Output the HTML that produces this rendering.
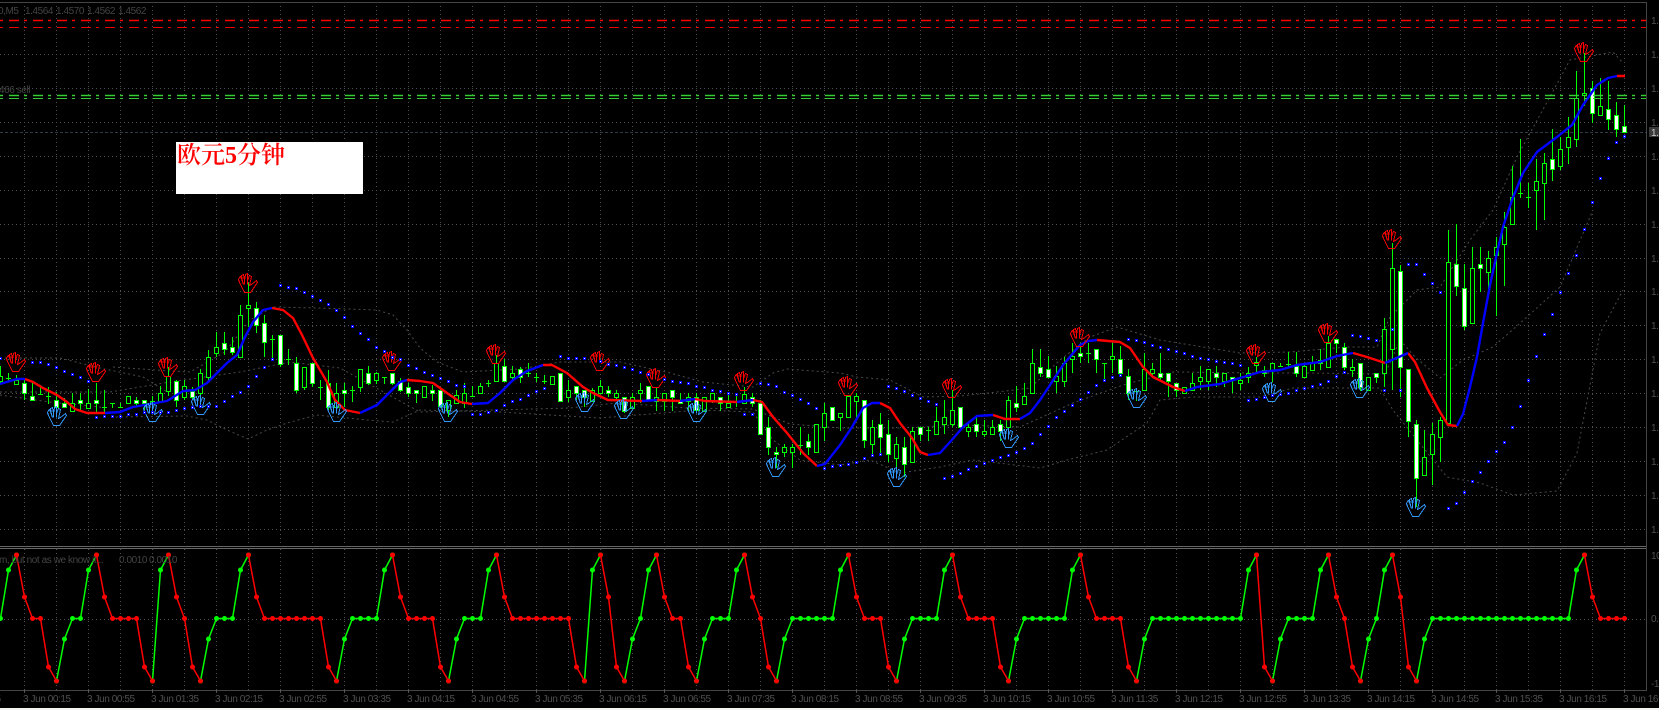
<!DOCTYPE html>
<html lang="zh"><head><meta charset="utf-8"><title>EURUSD M5</title>
<style>
html,body{margin:0;padding:0;background:#000;width:1659px;height:710px;overflow:hidden}
svg{display:block;position:absolute;left:0;top:0}
text{font-family:"Liberation Sans","Noto Sans CJK SC",sans-serif;font-size:10px;fill:#505050;letter-spacing:-.42px}
.cn{font-family:"Liberation Serif","Noto Serif CJK SC",serif;font-size:24px;font-weight:600;fill:#f00;letter-spacing:0}
.l{fill:#444}
</style></head><body>
<svg width="1659" height="710" viewBox="0 0 1659 710" xmlns="http://www.w3.org/2000/svg">
<defs>
<path id="h" fill="none" d="M6 19L1 9 0 6 1 4 2 3 4 8 3 2 5 1 6 7 7 1 9 0V7L11 2 13 3 11 12 13 11 18 7 19 9 12 19ZM4 8L5 11M6 7V11M9 7V11"/>
<marker id="mg" viewBox="-3 -3 6 6" markerWidth="5" markerHeight="5" markerUnits="userSpaceOnUse"><circle r="3" fill="#0f0"/></marker>
<marker id="mr" viewBox="-3 -3 6 6" markerWidth="5" markerHeight="5" markerUnits="userSpaceOnUse"><circle r="3" fill="#f00"/></marker>
</defs>
<rect width="1659" height="710" fill="#000"/>

<!-- grid -->
<path fill="none" stroke="#505050" stroke-dasharray="1 3" d="M24.5 2V546M56.5 2V546M88.5 2V546M120.5 2V546M152.5 2V546M184.5 2V546M216.5 2V546M248.5 2V546M280.5 2V546M312.5 2V546M344.5 2V546M376.5 2V546M408.5 2V546M440.5 2V546M472.5 2V546M504.5 2V546M536.5 2V546M568.5 2V546M600.5 2V546M632.5 2V546M664.5 2V546M696.5 2V546M728.5 2V546M760.5 2V546M792.5 2V546M824.5 2V546M856.5 2V546M888.5 2V546M920.5 2V546M952.5 2V546M984.5 2V546M1016.5 2V546M1048.5 2V546M1080.5 2V546M1112.5 2V546M1144.5 2V546M1176.5 2V546M1208.5 2V546M1240.5 2V546M1272.5 2V546M1304.5 2V546M1336.5 2V546M1368.5 2V546M1400.5 2V546M1432.5 2V546M1464.5 2V546M1496.5 2V546M1528.5 2V546M1560.5 2V546M1592.5 2V546M1624.5 2V546
M24.5 549V690M56.5 549V690M88.5 549V690M120.5 549V690M152.5 549V690M184.5 549V690M216.5 549V690M248.5 549V690M280.5 549V690M312.5 549V690M344.5 549V690M376.5 549V690M408.5 549V690M440.5 549V690M472.5 549V690M504.5 549V690M536.5 549V690M568.5 549V690M600.5 549V690M632.5 549V690M664.5 549V690M696.5 549V690M728.5 549V690M760.5 549V690M792.5 549V690M824.5 549V690M856.5 549V690M888.5 549V690M920.5 549V690M952.5 549V690M984.5 549V690M1016.5 549V690M1048.5 549V690M1080.5 549V690M1112.5 549V690M1144.5 549V690M1176.5 549V690M1208.5 549V690M1240.5 549V690M1272.5 549V690M1304.5 549V690M1336.5 549V690M1368.5 549V690M1400.5 549V690M1432.5 549V690M1464.5 549V690M1496.5 549V690M1528.5 549V690M1560.5 549V690M1592.5 549V690M1624.5 549V690
M0 54.5H1646M0 88.5H1646M0 122.5H1646M0 156.5H1646M0 190.5H1646M0 224.5H1646M0 258.5H1646M0 291.5H1646M0 325.5H1646M0 359.5H1646M0 393.5H1646M0 427.5H1646M0 461.5H1646M0 495.5H1646M0 529.5H1646M0 619.5H1646"/>
<path fill="none" stroke="#323a44" stroke-dasharray="3 2" d="M0 132.5H1646"/>

<!-- frame -->
<path fill="none" stroke="#444" d="M0 2.5H1646.5V690.5H0M1646.5 547V690"/>
<path fill="none" stroke="#666" d="M0 546.5H1646M0 548.5H1646"/>
<path fill="none" stroke="#555" d="M24.5 690V693M88.5 690V693M152.5 690V693M216.5 690V693M280.5 690V693M344.5 690V693M408.5 690V693M472.5 690V693M536.5 690V693M600.5 690V693M664.5 690V693M728.5 690V693M792.5 690V693M856.5 690V693M920.5 690V693M984.5 690V693M1048.5 690V693M1112.5 690V693M1176.5 690V693M1240.5 690V693M1304.5 690V693M1368.5 690V693M1432.5 690V693M1496.5 690V693M1560.5 690V693M1624.5 690V693"/>
<rect x="0" y="708" width="1659" height="2" fill="#f4f4f0"/>

<!-- bands -->
<g fill="none" stroke="#4a4a4a" stroke-dasharray="2 3">
<path d="M0 358L60 358 100 368 143 377 167 392M113 367L155 370 190 372 225 352 250 320 273 307 317 308 377 310 393 315 407 330 420 348 437 362 463 372 520 369 560 362 620 362 670 373 703 382 753 387 773 373 787 369 840 373 857 377 890 380 923 397 960 396 997 392 1030 388 1060 360 1090 337 1117 327 1160 340 1240 353 1290 352 1347 347 1377 347 1390 317 1417 290 1440 287 1470 240 1493 210 1517 157 1570 60 1613 52 1623 63"/>
<path d="M0 392L60 392 110 392 170 382 240 372 290 362 340 368 420 412 570 408 617 403 687 408 753 409 790 424 840 428 900 428 960 425 1020 427 1073 403 1123 385 1173 372 1260 373 1310 373 1385 374 1400 340 1415 357 1440 378 1463 360 1493 347 1527 317 1560 287 1593 210"/>
<path d="M0 395L50 402 100 407 113 417 187 416 207 420 227 430 248 439 267 430 287 423 317 415 367 420 393 422 420 410 500 412 600 418 700 410 753 412 773 440 800 460 840 465 870 460 900 473 940 467 973 460 1040 468 1067 460 1107 450 1147 423 1160 400 1193 397 1260 397 1293 388 1380 388 1385 397 1393 410 1417 440 1447 477 1480 483 1513 495 1557 491 1577 453 1600 333 1623 290"/>
</g>

<!-- candle wicks -->
<path fill="none" stroke="#0f0" shape-rendering="crispEdges" d="M.5 366V384M8.5 373V382M16.5 375V384M24.5 378V400M32.5 382V400M40.5 385V394M48.5 387V404M56.5 392V415M64.5 398V408M72.5 393V411M80.5 393V410M88.5 389V408M96.5 383V413M104.5 390V413M112.5 403V408M120.5 403V408M128.5 396V403M136.5 397V407M144.5 400V410M152.5 396V410M160.5 386V403M168.5 367V396M176.5 380V407M184.5 380V400M192.5 387V400M200.5 369V397M208.5 350V380M216.5 332V357M224.5 332V355M232.5 337V355M240.5 305V357M248.5 283V327M256.5 302V333M264.5 315V357M272.5 335V358M280.5 335V367M288.5 349V365M296.5 357V393M304.5 367V390M312.5 363V387M320.5 380V400M328.5 370V410M336.5 383V410M344.5 383V407M352.5 386V402M360.5 369V392M368.5 366V385M376.5 372V384M384.5 377V384M392.5 373V385M400.5 378V392M408.5 383V397M416.5 390V403M424.5 386V397M432.5 385V401M440.5 388V408M448.5 400V417M456.5 390V403M464.5 383V408M472.5 386V397M480.5 383V393M488.5 380V387M496.5 355V381M504.5 359V381M512.5 366V382M520.5 367V383M528.5 363V377M536.5 373V382M544.5 375V384M552.5 376V384M560.5 373V401M568.5 380V402M576.5 386V400M584.5 390V407M592.5 388V401M600.5 380V393M608.5 386V397M616.5 390V400M624.5 397V413M632.5 393V408M640.5 383V403M648.5 386V400M656.5 387V411M664.5 393V411M672.5 390V411M680.5 393V403M688.5 393V411M696.5 393V411M704.5 397V411M712.5 393V403M720.5 397V411M728.5 394V407M736.5 393V407M744.5 387V403M752.5 393V407M760.5 400V434M768.5 417V455M776.5 447V468M784.5 444V457M792.5 444V468M800.5 427V455M808.5 434V455M816.5 424V452M824.5 403V441M832.5 407V420M840.5 413V431M848.5 396V417M856.5 393V420M864.5 400V448M872.5 420V457M880.5 413V455M888.5 420V462M896.5 437V467M904.5 437V477M912.5 427V462M920.5 427V441M928.5 427V441M936.5 407V434M944.5 400V434M952.5 390V427M960.5 407V427M968.5 424V437M976.5 417V437M984.5 420V437M992.5 420V434M1000.5 420V441M1008.5 396V437M1016.5 386V412M1024.5 383V404M1032.5 349V393M1040.5 349V377M1048.5 356V377M1056.5 366V393M1064.5 357V387M1072.5 343V373M1080.5 343V363M1088.5 343V363M1096.5 349V373M1104.5 363V380M1112.5 343V373M1120.5 346V373M1128.5 369V400M1136.5 390V401M1144.5 353V390M1152.5 363V377M1160.5 353V380M1168.5 373V397M1176.5 383V397M1184.5 387V394M1192.5 373V390M1200.5 366V390M1208.5 369V390M1216.5 366V387M1224.5 373V387M1232.5 377V393M1240.5 373V390M1248.5 367V383M1256.5 357V373M1264.5 366V377M1272.5 363V382M1280.5 363V367M1288.5 352V367M1296.5 352V377M1304.5 363V377M1312.5 356V370M1320.5 349V370M1328.5 336V367M1336.5 339V353M1344.5 343V370M1352.5 359V377M1360.5 363V391M1368.5 377V390M1376.5 373V383M1384.5 318V387M1392.5 243V390M1400.5 265V397M1408.5 369V437M1416.5 420V507M1424.5 430V475M1432.5 423V485M1440.5 417V462M1448.5 230V423M1456.5 224V296M1464.5 264V330M1472.5 247V323M1480.5 247V292M1488.5 251V298M1496.5 237V316M1504.5 212V286M1512.5 166V224M1520.5 139V198M1528.5 183V208M1536.5 159V230M1544.5 153V220M1552.5 129V181M1560.5 137V170M1568.5 117V164M1576.5 71V147M1584.5 53V106M1592.5 81V123M1600.5 78V115M1608.5 81V130M1616.5 102V137M1624.5 105V132
M6 378.5h5M38 394.5h5M46 396.5h5M102 407.5h5M110 403.5h5M118 407.5h5M270 339.5h5M286 359.5h5M318 387.5h5M350 390.5h5M382 377.5h5M470 396.5h5M486 383.5h5M526 373.5h5M534 377.5h5M542 381.5h5M734 402.5h5M798 445.5h5M926 430.5h5M1086 353.5h5M1102 363.5h5M1134 391.5h5M1278 366.5h5M1286 364.5h5M1518 193.5h5M1526 197.5h5"/>

<!-- hollow bodies -->
<path fill="#000" stroke="#0f0" shape-rendering="crispEdges" d="M-1.5 376.5h4V381.5h-4zM14.5 380.5h4V384.5h-4zM70.5 403.5h4V411.5h-4zM86.5 403.5h4V408.5h-4zM126.5 396.5h4V403.5h-4zM150.5 401.5h4V404.5h-4zM158.5 393.5h4V401.5h-4zM166.5 376.5h4V391.5h-4zM182.5 386.5h4V397.5h-4zM198.5 373.5h4V393.5h-4zM206.5 357.5h4V377.5h-4zM214.5 347.5h4V353.5h-4zM238.5 315.5h4V357.5h-4zM246.5 305.5h4V308.5h-4zM302.5 367.5h4V387.5h-4zM334.5 393.5h4V407.5h-4zM358.5 369.5h4V387.5h-4zM374.5 373.5h4V380.5h-4zM422.5 386.5h4V397.5h-4zM446.5 400.5h4V410.5h-4zM454.5 395.5h4V403.5h-4zM462.5 393.5h4V403.5h-4zM478.5 386.5h4V393.5h-4zM494.5 363.5h4V381.5h-4zM510.5 373.5h4V377.5h-4zM550.5 376.5h4V384.5h-4zM566.5 390.5h4V397.5h-4zM590.5 390.5h4V401.5h-4zM598.5 386.5h4V393.5h-4zM614.5 393.5h4V397.5h-4zM630.5 397.5h4V408.5h-4zM638.5 390.5h4V393.5h-4zM654.5 397.5h4V401.5h-4zM662.5 393.5h4V401.5h-4zM686.5 397.5h4V401.5h-4zM702.5 397.5h4V411.5h-4zM710.5 393.5h4V400.5h-4zM726.5 403.5h4V407.5h-4zM742.5 394.5h4V403.5h-4zM782.5 447.5h4V452.5h-4zM790.5 447.5h4V452.5h-4zM814.5 424.5h4V452.5h-4zM822.5 413.5h4V427.5h-4zM838.5 413.5h4V417.5h-4zM846.5 396.5h4V417.5h-4zM854.5 396.5h4V401.5h-4zM870.5 427.5h4V444.5h-4zM894.5 444.5h4V458.5h-4zM910.5 431.5h4V462.5h-4zM934.5 421.5h4V434.5h-4zM942.5 417.5h4V424.5h-4zM950.5 410.5h4V424.5h-4zM966.5 427.5h4V431.5h-4zM982.5 431.5h4V434.5h-4zM990.5 427.5h4V434.5h-4zM1006.5 400.5h4V427.5h-4zM1022.5 396.5h4V404.5h-4zM1030.5 363.5h4V393.5h-4zM1054.5 376.5h4V381.5h-4zM1062.5 363.5h4V381.5h-4zM1070.5 356.5h4V359.5h-4zM1110.5 356.5h4V359.5h-4zM1142.5 369.5h4V390.5h-4zM1150.5 369.5h4V373.5h-4zM1182.5 387.5h4V393.5h-4zM1190.5 383.5h4V390.5h-4zM1198.5 377.5h4V381.5h-4zM1206.5 369.5h4V381.5h-4zM1222.5 373.5h4V381.5h-4zM1238.5 380.5h4V383.5h-4zM1246.5 373.5h4V377.5h-4zM1254.5 362.5h4V365.5h-4zM1270.5 363.5h4V370.5h-4zM1302.5 366.5h4V377.5h-4zM1310.5 363.5h4V370.5h-4zM1326.5 343.5h4V367.5h-4zM1350.5 367.5h4V370.5h-4zM1366.5 377.5h4V390.5h-4zM1382.5 329.5h4V373.5h-4zM1390.5 268.5h4V349.5h-4zM1422.5 457.5h4V475.5h-4zM1430.5 434.5h4V454.5h-4zM1438.5 420.5h4V437.5h-4zM1446.5 262.5h4V423.5h-4zM1470.5 268.5h4V323.5h-4zM1486.5 258.5h4V272.5h-4zM1494.5 247.5h4V255.5h-4zM1502.5 227.5h4V244.5h-4zM1510.5 197.5h4V224.5h-4zM1534.5 181.5h4V190.5h-4zM1542.5 163.5h4V183.5h-4zM1558.5 149.5h4V166.5h-4zM1566.5 137.5h4V147.5h-4zM1574.5 98.5h4V139.5h-4zM1582.5 93.5h4V95.5h-4zM1598.5 106.5h4V115.5h-4z"/>

<!-- white bodies -->
<path fill="#fff" stroke="#0f0" shape-rendering="crispEdges" d="M22.5 383.5h4V393.5h-4zM30.5 396.5h4V400.5h-4zM54.5 400.5h4V407.5h-4zM62.5 403.5h4V407.5h-4zM78.5 400.5h4V403.5h-4zM94.5 400.5h4V403.5h-4zM134.5 400.5h4V403.5h-4zM142.5 400.5h4V403.5h-4zM174.5 381.5h4V400.5h-4zM190.5 391.5h4V397.5h-4zM222.5 343.5h4V349.5h-4zM230.5 347.5h4V352.5h-4zM254.5 308.5h4V325.5h-4zM262.5 323.5h4V342.5h-4zM278.5 335.5h4V364.5h-4zM294.5 363.5h4V390.5h-4zM310.5 363.5h4V383.5h-4zM326.5 383.5h4V407.5h-4zM342.5 390.5h4V393.5h-4zM366.5 373.5h4V383.5h-4zM390.5 373.5h4V383.5h-4zM398.5 381.5h4V390.5h-4zM406.5 387.5h4V393.5h-4zM414.5 390.5h4V393.5h-4zM430.5 390.5h4V393.5h-4zM438.5 390.5h4V406.5h-4zM502.5 366.5h4V381.5h-4zM518.5 369.5h4V377.5h-4zM558.5 373.5h4V401.5h-4zM574.5 386.5h4V393.5h-4zM582.5 390.5h4V397.5h-4zM606.5 390.5h4V393.5h-4zM622.5 397.5h4V411.5h-4zM646.5 386.5h4V400.5h-4zM670.5 390.5h4V397.5h-4zM678.5 400.5h4V403.5h-4zM694.5 397.5h4V410.5h-4zM718.5 397.5h4V403.5h-4zM750.5 397.5h4V403.5h-4zM758.5 403.5h4V434.5h-4zM766.5 427.5h4V447.5h-4zM774.5 452.5h4V454.5h-4zM806.5 441.5h4V447.5h-4zM830.5 407.5h4V420.5h-4zM862.5 400.5h4V440.5h-4zM878.5 424.5h4V437.5h-4zM886.5 434.5h4V454.5h-4zM902.5 447.5h4V464.5h-4zM918.5 427.5h4V434.5h-4zM958.5 407.5h4V427.5h-4zM974.5 424.5h4V431.5h-4zM998.5 424.5h4V431.5h-4zM1014.5 403.5h4V407.5h-4zM1038.5 367.5h4V373.5h-4zM1046.5 369.5h4V377.5h-4zM1078.5 353.5h4V356.5h-4zM1094.5 349.5h4V359.5h-4zM1118.5 359.5h4V373.5h-4zM1126.5 376.5h4V393.5h-4zM1158.5 373.5h4V377.5h-4zM1166.5 373.5h4V381.5h-4zM1174.5 383.5h4V390.5h-4zM1214.5 373.5h4V377.5h-4zM1230.5 377.5h4V380.5h-4zM1262.5 370.5h4V373.5h-4zM1294.5 366.5h4V373.5h-4zM1318.5 360.5h4V363.5h-4zM1334.5 339.5h4V343.5h-4zM1342.5 347.5h4V367.5h-4zM1358.5 363.5h4V387.5h-4zM1374.5 373.5h4V377.5h-4zM1398.5 271.5h4V367.5h-4zM1406.5 369.5h4V421.5h-4zM1414.5 424.5h4V478.5h-4zM1454.5 264.5h4V286.5h-4zM1462.5 288.5h4V326.5h-4zM1478.5 264.5h4V268.5h-4zM1550.5 159.5h4V169.5h-4zM1590.5 88.5h4V113.5h-4zM1606.5 109.5h4V119.5h-4zM1614.5 115.5h4V129.5h-4zM1622.5 126.5h4V132.5h-4z"/>

<!-- moving average -->
<g fill="none" stroke-width="2.4" stroke-linejoin="round">
<path stroke="#f00" d="M25 379L33 382 43 388 57 395 67 402 75 409 87 413H105M272 308L283 310 293 318 302 335 313 358 327 382 335 400 345 410 360 413M407 380L420 381 433 383 447 393 460 402 472 404M543 365H552L567 373 583 387 593 393 608 400 642 401M657 400L680 401M695 399L705 401 737 402M753 400L762 402 773 417 787 433 803 453 817 466M880 403L890 408 900 423 912 438 920 452 928 455M993 415L1005 419 1020 419M1097 340L1120 342 1130 348 1143 367 1153 377 1173 387 1185 391M1353 353L1367 357 1385 363M1408 353L1415 362 1427 388 1440 412 1448 425 1457 426M1617 76H1625"/>
<path stroke="#00f" d="M0 384L10 381 17 379H25M105 413L120 412 133 407 150 404 167 401 183 391 195 390 207 383 217 373 227 363 237 355 245 337 253 322 263 310 272 308M360 413L377 405 390 392 400 382 407 380M472 404L488 403 500 393 513 380 527 371 543 365M642 401L657 400M680 401L695 399M737 402L753 400M817 466L825 464 840 445 852 427 863 408 872 403H880M928 455L940 453 950 442 963 427 977 416 993 415M1020 419L1030 413 1040 400 1050 385 1063 365 1080 345 1088 341 1097 340M1185 391L1197 387 1220 384 1240 378 1260 372 1280 370 1297 365 1320 362 1337 356 1353 353M1385 363L1408 353M1457 426L1463 414 1470 387 1477 357 1483 323 1490 285 1497 253 1503 227 1512 200 1523 173 1537 152 1557 137 1572 125 1583 105 1597 85 1608 78 1617 76"/>
</g>

<!-- fractal hands -->
<g stroke="#f00" shape-rendering="crispEdges">
<use href="#h" x="6.5" y="352.5"/><use href="#h" x="86.5" y="362.5"/><use href="#h" x="158.5" y="357.5"/><use href="#h" x="238.5" y="273.5"/><use href="#h" x="382.5" y="351.5"/><use href="#h" x="486.5" y="344.5"/><use href="#h" x="590.5" y="351.5"/><use href="#h" x="646.5" y="368.5"/><use href="#h" x="734.5" y="371.5"/><use href="#h" x="838.5" y="376.5"/><use href="#h" x="942.5" y="378.5"/><use href="#h" x="1070.5" y="327.5"/><use href="#h" x="1246.5" y="344.5"/><use href="#h" x="1318.5" y="323.5"/><use href="#h" x="1382.5" y="229.5"/><use href="#h" x="1574.5" y="42.5"/>
</g>
<g stroke="#3399ff" shape-rendering="crispEdges">
<use href="#h" x="47.5" y="406.5"/><use href="#h" x="143.5" y="402.5"/><use href="#h" x="191.5" y="395.5"/><use href="#h" x="327.5" y="402.5"/><use href="#h" x="438.5" y="402.5"/><use href="#h" x="575.5" y="392.5"/><use href="#h" x="614.5" y="399.5"/><use href="#h" x="687.5" y="402.5"/><use href="#h" x="766.5" y="457.5"/><use href="#h" x="887.5" y="467.5"/><use href="#h" x="999.5" y="428.5"/><use href="#h" x="1127.5" y="388.5"/><use href="#h" x="1262.5" y="382.5"/><use href="#h" x="1350.5" y="378.5"/><use href="#h" x="1406.5" y="497.5"/>
</g>

<!-- parabolic sar -->
<defs><path id="s" d="M.5 358.5h0M32.5 362.5h0M40.5 362.5h0M48.5 364.5h0M56.5 367.5h0M64.5 371.5h0M72.5 374.5h0M80.5 377.5h0M88.5 381.5h0M96.5 417.5h0M104.5 416.5h0M112.5 416.5h0M120.5 416.5h0M128.5 414.5h0M136.5 414.5h0M144.5 412.5h0M152.5 412.5h0M160.5 412.5h0M168.5 412.5h0M176.5 410.5h0M184.5 408.5h0M192.5 407.5h0M200.5 406.5h0M208.5 406.5h0M216.5 406.5h0M224.5 401.5h0M232.5 396.5h0M240.5 392.5h0M248.5 386.5h0M256.5 376.5h0M264.5 367.5h0M272.5 359.5h0M280.5 285.5h0M288.5 287.5h0M296.5 288.5h0M304.5 292.5h0M312.5 296.5h0M320.5 300.5h0M328.5 304.5h0M336.5 310.5h0M344.5 317.5h0M352.5 326.5h0M360.5 333.5h0M368.5 339.5h0M376.5 347.5h0M384.5 351.5h0M392.5 357.5h0M400.5 359.5h0M408.5 365.5h0M416.5 368.5h0M424.5 372.5h0M432.5 375.5h0M440.5 378.5h0M448.5 381.5h0M456.5 385.5h0M464.5 386.5h0M472.5 414.5h0M480.5 414.5h0M488.5 412.5h0M496.5 410.5h0M504.5 405.5h0M512.5 401.5h0M520.5 399.5h0M528.5 395.5h0M536.5 391.5h0M544.5 388.5h0M560.5 356.5h0M568.5 358.5h0M576.5 358.5h0M584.5 358.5h0M600.5 361.5h0M608.5 364.5h0M616.5 365.5h0M624.5 367.5h0M632.5 369.5h0M640.5 372.5h0M648.5 374.5h0M664.5 379.5h0M672.5 381.5h0M680.5 382.5h0M688.5 383.5h0M696.5 386.5h0M704.5 387.5h0M712.5 390.5h0M720.5 391.5h0M728.5 393.5h0M736.5 394.5h0M744.5 414.5h0M752.5 414.5h0M760.5 383.5h0M768.5 384.5h0M776.5 386.5h0M784.5 392.5h0M792.5 395.5h0M800.5 399.5h0M808.5 403.5h0M816.5 408.5h0M824.5 468.5h0M832.5 466.5h0M840.5 465.5h0M848.5 464.5h0M856.5 462.5h0M864.5 458.5h0M872.5 455.5h0M880.5 454.5h0M888.5 386.5h0M896.5 388.5h0M904.5 391.5h0M912.5 395.5h0M920.5 398.5h0M928.5 401.5h0M936.5 404.5h0M944.5 478.5h0M952.5 476.5h0M960.5 473.5h0M968.5 469.5h0M976.5 466.5h0M984.5 463.5h0M992.5 460.5h0M1000.5 457.5h0M1008.5 455.5h0M1016.5 452.5h0M1024.5 448.5h0M1032.5 443.5h0M1040.5 434.5h0M1048.5 426.5h0M1056.5 417.5h0M1064.5 411.5h0M1072.5 405.5h0M1080.5 399.5h0M1088.5 392.5h0M1096.5 385.5h0M1104.5 380.5h0M1112.5 377.5h0M1120.5 375.5h0M1128.5 339.5h0M1136.5 340.5h0M1144.5 342.5h0M1152.5 345.5h0M1160.5 347.5h0M1168.5 349.5h0M1176.5 351.5h0M1184.5 353.5h0M1192.5 356.5h0M1200.5 358.5h0M1208.5 359.5h0M1216.5 361.5h0M1224.5 362.5h0M1232.5 363.5h0M1240.5 365.5h0M1248.5 400.5h0M1256.5 399.5h0M1264.5 397.5h0M1272.5 395.5h0M1280.5 394.5h0M1288.5 393.5h0M1296.5 390.5h0M1304.5 388.5h0M1312.5 386.5h0M1320.5 384.5h0M1328.5 381.5h0M1336.5 376.5h0M1344.5 372.5h0M1352.5 335.5h0M1360.5 336.5h0M1368.5 338.5h0M1376.5 340.5h0M1384.5 390.5h0M1392.5 329.5h0M1400.5 390.5h0M1408.5 264.5h0M1416.5 264.5h0M1424.5 274.5h0M1432.5 283.5h0M1440.5 292.5h0M1448.5 508.5h0M1456.5 503.5h0M1464.5 492.5h0M1472.5 481.5h0M1480.5 472.5h0M1488.5 461.5h0M1496.5 451.5h0M1504.5 442.5h0M1512.5 427.5h0M1520.5 406.5h0M1528.5 380.5h0M1536.5 356.5h0M1544.5 334.5h0M1552.5 314.5h0M1560.5 292.5h0M1568.5 273.5h0M1576.5 255.5h0M1584.5 229.5h0M1592.5 202.5h0M1600.5 178.5h0M1608.5 158.5h0M1616.5 142.5h0M1624.5 136.5h0"/></defs>
<use href="#s" fill="none" stroke="#00f" stroke-width="3" stroke-linecap="square" shape-rendering="crispEdges"/>
<use href="#s" fill="none" stroke="#fff" stroke-width="1" stroke-linecap="square" shape-rendering="crispEdges"/>

<!-- horizontal level lines -->
<g fill="none" stroke-dasharray="10 5 3 6" stroke-dashoffset="15">
<path stroke="#f00" stroke-width="1.6" d="M0 20.5H1646"/>
<path stroke="#e00" d="M0 27.5H1646"/>
<path stroke="#3c3" stroke-width="1.4" d="M0 95.5H1646"/>
<path stroke="#3c3" d="M0 98.5H1646"/>
</g>

<!-- indicator -->
<g fill="none" stroke-width="1.5" stroke-linejoin="round">
<path stroke="#0f0" marker-start="url(#mg)" marker-mid="url(#mg)" marker-end="url(#mg)" d="M.5 618.5L8.5 570 16.5 555M56.5 681L64.5 639 72.5 618.5h8L88.5 570 96.5 555M152.5 681L160.5 570 168.5 555M200.5 681L208.5 639 216.5 618.5h8h8L240.5 570 248.5 555M336.5 681L344.5 639 352.5 618.5h8h8h8L384.5 570 392.5 555M448.5 681L456.5 639 464.5 618.5h8h8L488.5 570 496.5 555M584.5 681L592.5 570 600.5 555M624.5 681L632.5 639 640.5 618.5 648.5 570 656.5 555M696.5 681L704.5 639 712.5 618.5h8h8L736.5 570 744.5 555M776.5 681L784.5 639 792.5 618.5h8h8h8h8h8L840.5 570 848.5 555M896.5 681L904.5 639 912.5 618.5h8h8h8L944.5 570 952.5 555M1008.5 681L1016.5 639 1024.5 618.5h8h8h8h8h8L1072.5 570 1080.5 555M1136.5 681L1144.5 639 1152.5 618.5h8h8h8h8h8h8h8h8h8h8h8L1248.5 570 1256.5 555M1272.5 681L1280.5 639 1288.5 618.5h8h8h8L1320.5 570 1328.5 555M1360.5 681L1368.5 639 1376.5 618.5 1384.5 570 1392.5 555M1416.5 681L1424.5 639 1432.5 618.5h8h8h8h8h8h8h8h8h8h8h8h8h8h8h8h8h8L1576.5 570 1584.5 555"/>
<path stroke="#f00" marker-start="url(#mr)" marker-mid="url(#mr)" marker-end="url(#mr)" d="M16.5 555L24.5 597 32.5 618.5h8L48.5 667 56.5 681M96.5 555L104.5 597 112.5 618.5h8h8h8L144.5 667 152.5 681M168.5 555L176.5 597 184.5 618.5 192.5 667 200.5 681M248.5 555L256.5 597 264.5 618.5h8h8h8h8h8h8h8L328.5 667 336.5 681M392.5 555L400.5 597 408.5 618.5h8h8h8L440.5 667 448.5 681M496.5 555L504.5 597 512.5 618.5h8h8h8h8h8h8h8L576.5 667 584.5 681M600.5 555L608.5 597 616.5 667 624.5 681M656.5 555L664.5 597 672.5 618.5h8L688.5 667 696.5 681M744.5 555L752.5 597 760.5 618.5 768.5 667 776.5 681M848.5 555L856.5 597 864.5 618.5h8h8L888.5 667 896.5 681M952.5 555L960.5 597 968.5 618.5h8h8h8L1000.5 667 1008.5 681M1080.5 555L1088.5 597 1096.5 618.5h8h8h8L1128.5 667 1136.5 681M1256.5 555L1264.5 667 1272.5 681M1328.5 555L1336.5 597 1344.5 618.5 1352.5 667 1360.5 681M1392.5 555L1400.5 597 1408.5 667 1416.5 681M1584.5 555L1592.5 597 1600.5 618.5h8h8h8"/>
</g>

<!-- text box -->
<rect x="176" y="142" width="187" height="52" fill="#fff"/>
<text class="cn" x="177" y="163">欧元5分钟</text>

<!-- legends -->
<text class="l" x="-2" y="14">0,M5</text>
<text class="l" x="25" y="14">1.4564</text>
<text class="l" x="56" y="14">1.4570</text>
<text class="l" x="87" y="14">1.4562</text>
<text class="l" x="118" y="14">1.4562</text>
<text class="l" x="-1" y="93">466 sell</text>
<text class="l" x="-1" y="563">m, but not as we know it...</text>
<text class="l" x="119" y="563">0.0010</text>
<text class="l" x="149" y="563">0.0010</text>

<!-- right axis -->
<rect x="1649" y="127" width="10" height="10" fill="#3a3a3a"/>
<g>
<text x="1651" y="24">1.</text><text x="1651" y="58">1.</text><text x="1651" y="92">1.</text><text x="1651" y="126">1.</text>
<text x="1651" y="136" style="fill:#ccc">1.</text>
<text x="1651" y="160">1.</text><text x="1651" y="194">1.</text><text x="1651" y="228">1.</text><text x="1651" y="262">1.</text><text x="1651" y="295">1.</text><text x="1651" y="329">1.</text><text x="1651" y="363">1.</text><text x="1651" y="397">1.</text><text x="1651" y="431">1.</text><text x="1651" y="465">1.</text><text x="1651" y="499">1.</text><text x="1651" y="533">1.</text>
<text x="1651" y="559">10</text><text x="1651" y="622">0.0</text><text x="1651" y="687">-10</text>
</g>

<!-- time axis -->
<g>
<text x="-47" y="702">3 Jun 23:35</text><text x="23" y="702">3 Jun 00:15</text><text x="87" y="702">3 Jun 00:55</text><text x="151" y="702">3 Jun 01:35</text><text x="215" y="702">3 Jun 02:15</text><text x="279" y="702">3 Jun 02:55</text><text x="343" y="702">3 Jun 03:35</text><text x="407" y="702">3 Jun 04:15</text><text x="471" y="702">3 Jun 04:55</text><text x="535" y="702">3 Jun 05:35</text><text x="599" y="702">3 Jun 06:15</text><text x="663" y="702">3 Jun 06:55</text><text x="727" y="702">3 Jun 07:35</text><text x="791" y="702">3 Jun 08:15</text><text x="855" y="702">3 Jun 08:55</text><text x="919" y="702">3 Jun 09:35</text><text x="983" y="702">3 Jun 10:15</text><text x="1047" y="702">3 Jun 10:55</text><text x="1111" y="702">3 Jun 11:35</text><text x="1175" y="702">3 Jun 12:15</text><text x="1239" y="702">3 Jun 12:55</text><text x="1303" y="702">3 Jun 13:35</text><text x="1367" y="702">3 Jun 14:15</text><text x="1431" y="702">3 Jun 14:55</text><text x="1495" y="702">3 Jun 15:35</text><text x="1559" y="702">3 Jun 16:15</text><text x="1623" y="702">3 Jun 16:55</text>
</g>
</svg>
</body></html>
